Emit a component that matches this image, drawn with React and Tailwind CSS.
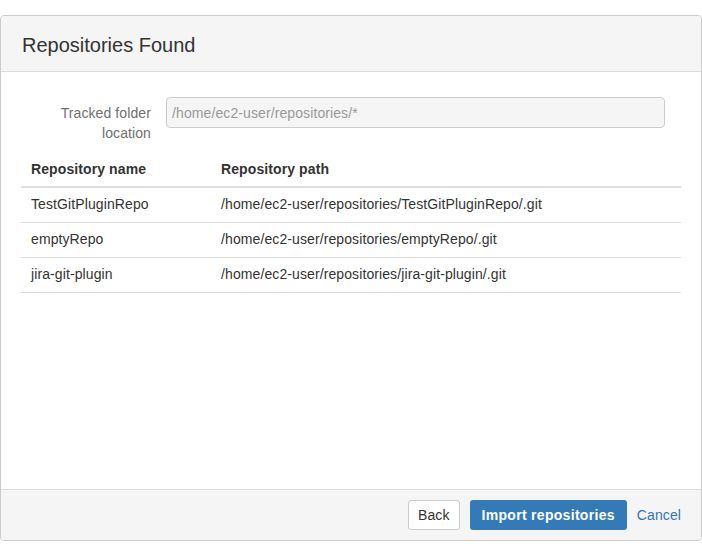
export default function App() {
  const repos = [
    { name: 'TestGitPluginRepo', path: '/home/ec2-user/repositories/TestGitPluginRepo/.git' },
    { name: 'emptyRepo', path: '/home/ec2-user/repositories/emptyRepo/.git' },
    { name: 'jira-git-plugin', path: '/home/ec2-user/repositories/jira-git-plugin/.git' },
  ];

  return (
    <div className="h-[556px] bg-white pt-[15px] text-[14px] text-[#333] tracking-[0.1px]" style={{ fontFamily: '"Liberation Sans", Arial, sans-serif' }}>
      <div className="h-[526px] w-[702px] border border-[#ccc] rounded-[4px] flex flex-col overflow-hidden">
        {/* Header */}
        <div className="h-[56px] shrink-0 bg-[#f5f5f5] border-b border-[#ddd] px-[21px] pt-[3px] flex items-center">
          <h1 className="text-[20px] leading-none text-[#333] tracking-normal">Repositories Found</h1>
        </div>

        {/* Body */}
        <div className="flex-1 pt-[25px] px-[20px]">
          <div className="flex gap-[15px] pr-[16px] mb-[9px]">
            <label className="w-[130px] shrink-0 text-right text-[#707070] leading-[20px] pt-[6px]">
              Tracked folder location
            </label>
            <input
              disabled
              value="/home/ec2-user/repositories/*"
              className="flex-1 h-[31px] px-[5px] bg-[#f5f5f5] border border-[#ccc] rounded-[4px] text-[#999] text-[14px]"
              readOnly
            />
          </div>

          <table className="w-full border-collapse">
            <thead>
              <tr className="h-[35px] border-b-2 border-[#ddd]">
                <th className="w-[190px] text-left font-bold pl-[10px] pr-[8px] align-middle">Repository name</th>
                <th className="text-left font-bold pl-[10px] pr-[8px] align-middle">Repository path</th>
              </tr>
            </thead>
            <tbody>
              {repos.map((r) => (
                <tr key={r.name} className="h-[35px] border-b border-[#ddd]">
                  <td className="pl-[10px] pr-[8px] align-middle">{r.name}</td>
                  <td className="pl-[10px] pr-[8px] align-middle">{r.path}</td>
                </tr>
              ))}
            </tbody>
          </table>
        </div>

        {/* Footer */}
        <div className="h-[51px] shrink-0 bg-[#f5f5f5] border-t border-[#ddd] flex items-center justify-end pr-[20px]">
          <button className="h-[30px] px-[9px] bg-white border border-[#ccc] rounded-[3px] text-[#333]">Back</button>
          <button className="h-[30px] ml-[10px] px-[12px] bg-[#337ab7] rounded-[3px] text-white font-bold tracking-[0.3px]">Import repositories</button>
          <a href="#" className="ml-[10px] text-[#3572b0]">Cancel</a>
        </div>
      </div>
    </div>
  );
}
